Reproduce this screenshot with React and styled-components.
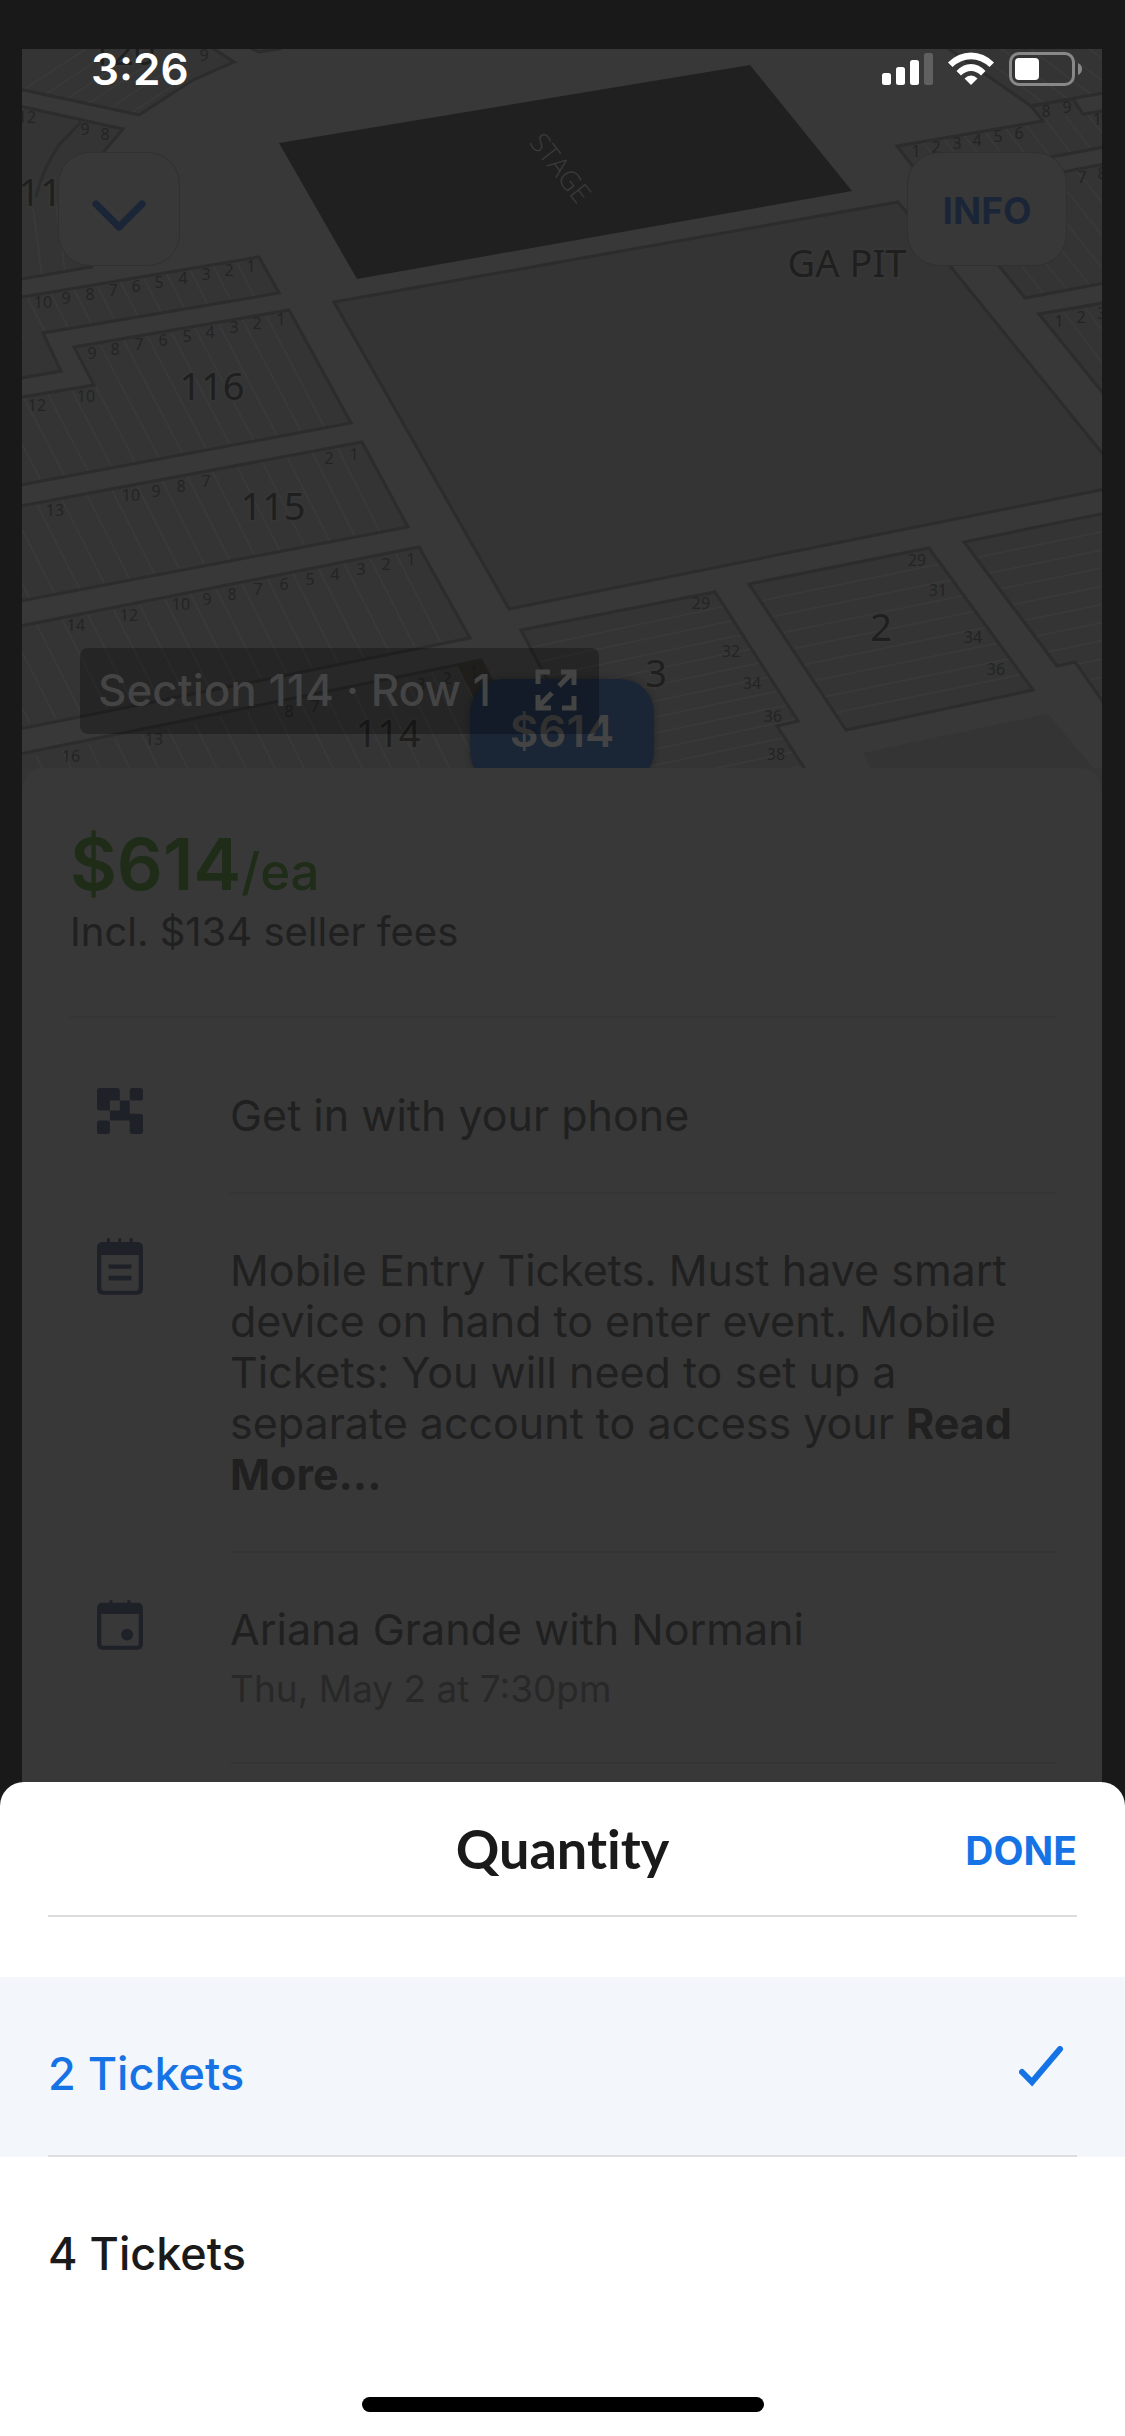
import React, { useState } from "react";
import styled, { createGlobalStyle } from "styled-components";

const sections = [
  {
    id: "s120",
    points: "10,40 200,40 234,62 193,80 139,115 10,87",
    rows: [20, 92, 86, 49, 21, 5, 8],
  },
  { id: "s121", points: "240,40 252,49 259,52 279,49 300,40", rows: [0, 0, 0, 0, 0, 0, 0] },
  {
    id: "s117",
    points: "10,104 123,129 100,156 60,210 91,267 10,281",
    rows: [33, 208, 42, 276, 23, -4, 3],
  },
  {
    id: "s117b",
    points: "10,299 259,257 279,293 43,333 61,371 10,380",
    rows: [236, 261, 255, 298, -23.2, 4, 11],
  },
  {
    id: "s116",
    points: "74,347 289,310 351,423 10,487 10,399 94,385",
    rows: [266, 315, 325, 428, -23.7, 4.3, 15],
  },
  {
    id: "s115",
    points: "10,508 362,442 408,527 10,603",
    rows: [337, 447, 380, 532, -25, 4.8, 15],
  },
  {
    id: "s114a",
    points: "10,628 419,547 470,638 10,731",
    rows: [395, 552, 441, 643, -25.7, 5, 17],
  },
  {
    id: "s114",
    points: "10,756 481,660 545,780 10,780",
    rows: [457, 665, 510, 773, -26.3, 5.7, 18],
  },
  {
    id: "s3",
    points: "521,630 715,592 798,721 777,726 812,780 600,780",
    rows: [500, 654, 840, 582, 0, 16, 14],
  },
  {
    id: "s2",
    points: "749,584 929,548 1033,690 846,730",
    rows: [755, 602, 950, 562, 10.6, 16, 8],
  },
  {
    id: "s1",
    points: "964,542 1120,510 1120,726 1075,662 1057,666",
    rows: [974, 558, 1130, 526, 10.6, 16, 12],
  },
  {
    id: "r1",
    points: "936,40 1031,106 1120,90 1120,40",
    rows: [960, 40, 1053, 110, 24, -4, 5],
  },
  {
    id: "r2",
    points: "1031,106 1043,121 897,146 924,181 1120,144 1120,108 1083,114 1073,99",
    rows: [922, 141, 950, 177, 20.5, -3.6, 10],
  },
  {
    id: "r3",
    points: "942,195 1120,161 1120,280 1025,298",
    rows: [962, 191, 1045, 295, 23, -4, 9],
  },
  {
    id: "r4",
    points: "1039,314 1120,300 1120,414",
    rows: [1062, 310, 1130, 400, 22, -4, 3],
  },
];

const rowNumbers = [
  [204, 61, "9"], [27, 123, "12"], [85, 135, "9"], [105, 140, "8"],
  [43, 308, "10"], [66, 304, "9"], [90, 300, "8"], [113, 296, "7"], [136, 292, "6"],
  [159, 288, "5"], [183, 284, "4"], [206, 280, "3"], [229, 276, "2"], [251, 272, "1"],
  [92, 359, "9"], [115, 355, "8"], [139, 350, "7"], [163, 346, "6"], [187, 342, "5"],
  [210, 338, "4"], [234, 333, "3"], [257, 329, "2"], [281, 325, "1"],
  [86, 402, "10"], [37, 411, "12"],
  [354, 460, "1"], [329, 464, "2"], [206, 487, "7"], [181, 492, "8"], [156, 497, "9"],
  [131, 501, "10"], [55, 516, "13"],
  [411, 565, "1"], [386, 570, "2"], [361, 575, "3"], [335, 580, "4"], [310, 585, "5"],
  [284, 590, "6"], [258, 595, "7"], [232, 600, "8"], [207, 605, "9"], [181, 610, "10"],
  [129, 621, "12"], [76, 631, "14"],
  [474, 678, "1"], [447, 684, "2"], [421, 690, "3"], [315, 712, "7"], [289, 717, "8"],
  [154, 745, "13"], [71, 762, "16"],
  [701, 609, "29"], [731, 657, "32"], [752, 689, "34"], [773, 722, "36"], [776, 760, "38"],
  [917, 566, "29"], [938, 596, "31"], [973, 643, "34"], [996, 675, "36"],
  [916, 157, "1"], [936, 153, "2"], [957, 149, "3"], [977, 146, "4"], [998, 142, "5"],
  [1019, 139, "6"], [1046, 117, "8"], [1067, 113, "9"], [1102, 125, "10"],
  [1082, 183, "7"], [1102, 179, "8"], [1059, 327, "1"], [1081, 323, "2"], [1102, 319, "3"],
];

const sectionNames = [
  [123, 65, "120"], [51, 206, "117"], [212, 400, "116"], [273, 520, "115"],
  [388, 747, "114"], [656, 687, "3"], [881, 641, "2"], [847, 277, "GA PIT"],
];

const quantities = [2, 4];

const SeatMap = () => (
  <StyledMapSvg viewBox="22 49 1080 719" preserveAspectRatio="xMidYMin slice">
    {sections.map(({ id, points, rows }) => {
      const [x1, y1, x2, y2, dx, dy, count] = rows;
      return (
        <g key={id}>
          <clipPath id={id}>
            <polygon points={points} />
          </clipPath>
          <polygon points={points} fill="#343434" />
          <g clipPath={`url(#${id})`} stroke="#393939" strokeWidth="2">
            {Array.from({ length: count }, (_, i) => (
              <line
                key={i}
                x1={x1 + dx * i}
                y1={y1 + dy * i}
                x2={x2 + dx * i}
                y2={y2 + dy * i}
              />
            ))}
          </g>
          <polygon points={points} fill="none" stroke="#2c2c2c" strokeWidth="3" />
        </g>
      );
    })}
    <path d="M81 122L59 145Q42 170 36 197" fill="none" stroke="#2c2c2c" strokeWidth="3" />
    <polygon points="457,665 481,660 538,768 510,768" fill="#2c2a26" />
    <polygon points="863,753 1048,714 1093,768 871,768" fill="#343434" />
    <polygon
      points="334,302 898,202 1120,475 1120,486 509,609"
      fill="#343434"
      stroke="#2c2c2c"
      strokeWidth="3"
    />
    <polygon points="279,143 750,65 852,191 357,279" fill="#202020" />
    <text
      transform="translate(553 174) rotate(52)"
      fontFamily="'Open Sans', sans-serif"
      fontWeight="300"
      fontSize="27"
      textAnchor="middle"
      fill="#3b3b3b"
    >
      STAGE
    </text>
    <g fontFamily="'Noto Sans', sans-serif" textAnchor="middle">
      {rowNumbers.map(([x, y, label]) => (
        <text key={`${x}-${y}`} x={x} y={y} fontSize="16" fill="#242424">
          {label}
        </text>
      ))}
      {sectionNames.map(([x, y, label]) => (
        <text
          key={label}
          x={x}
          y={y}
          fontSize="38"
          fill="#1f1f1f"
          stroke="#363636"
          strokeWidth="4"
          paintOrder="stroke"
        >
          {label}
        </text>
      ))}
    </g>
  </StyledMapSvg>
);

const StatusIcons = () => (
  <svg width="201" height="34" viewBox="0 0 201 34" fill="#fff">
    <rect x="0" y="21" width="9" height="12" rx="2.5" />
    <rect x="14" y="15" width="9" height="18" rx="2.5" />
    <rect x="28" y="8" width="9" height="25" rx="2.5" />
    <rect x="42" y="1" width="9" height="32" rx="2.5" fill="#606060" />
    <path d="M66 10.500Q76 .5 89 .5T112 10.500L107.500 15Q99 7.200 89 7.200T70.500 15Z" />
    <path d="M74.500 19Q81 12 89 12T103.500 19L99 23.500Q94.500 19 89 19T79 23.500Z" />
    <path d="M82.500 26.500Q85.500 23.500 89 23.500T95.500 26.500L89 33Z" />
    <rect x="128.500" y="1.500" width="63" height="31" rx="8.500" fill="none" stroke="#888" strokeWidth="3" />
    <rect x="133" y="6" width="24" height="22" rx="4" />
    <path d="M196 11Q200 13 200 17T196 23Z" fill="#888" />
  </svg>
);

const PhoneEntryIcon = () => (
  <svg width="46" height="46" viewBox="52 89 139 139" fill="#1f2128">
    <path d="M60 89H113Q121 89 121 97V127H91V157H60Q52 157 52 149V97Q52 89 60 89Z" />
    <rect x="151" y="89" width="40" height="38" rx="8" />
    <path d="M121 127H151V167H183Q191 167 191 175V220Q191 228 183 228H159Q151 228 151 220V187H91V157H121Z" />
    <rect x="52" y="187" width="39" height="41" rx="8" />
  </svg>
);

const NotesIcon = () => (
  <svg width="46" height="57" viewBox="0 0 139 170" fill="#1f2128">
    <path d="M30 0h9v14h-9zM64 0h9v14h-9zM99 0h9v14h-9zM35 79h69v13H35zM35 113h69v14H35z" />
    <path
      fillRule="evenodd"
      d="M18 11H121Q139 11 139 29V152Q139 170 121 170H18Q0 170 0 152V29Q0 11 18 11ZM13 50V150Q13 158 21 158H118Q126 158 126 150V50Z"
    />
  </svg>
);

const CalendarIcon = () => (
  <svg width="46" height="50" viewBox="0 0 139 150" fill="#1f2128">
    <path d="M38 0h9v14h-9zM92 0h9v14h-9z" />
    <circle cx="91" cy="104" r="18" />
    <path
      fillRule="evenodd"
      d="M18 8H121Q139 8 139 26V132Q139 150 121 150H18Q0 150 0 132V26Q0 8 18 8ZM13 42V130Q13 138 21 138H118Q126 138 126 130V42Z"
    />
  </svg>
);

const App = () => {
  const [quantity, setQuantity] = useState(2);

  const onChange = (e) => {
    setQuantity(Number(e.target.value));
  };

  return (
    <StyledPage>
      <GlobalStyle />
      <StyledStatusBar>
        <span>3:26</span>
        <StatusIcons />
      </StyledStatusBar>

      <StyledListing>
        <StyledCard>
          <StyledMap>
            <SeatMap />
            <StyledPriceTag>$614</StyledPriceTag>
            <StyledSeatPill>
              Section 114 · Row 1
              <svg width="42" height="42" viewBox="0 0 42 42" fill="none" stroke="#444" strokeWidth="5">
                <path d="M3 15V3H15M39 27V39H27M24 17L37 4M26 3H39V16M17 24L4 37M3 26V39H16" />
              </svg>
            </StyledSeatPill>
            <StyledMapControls>
              <StyledMapButton aria-label="Close">
                <svg width="54" height="36" viewBox="0 0 54 36" fill="none">
                  <path
                    d="M4 6L27 29L50 6"
                    stroke="#1a2637"
                    strokeWidth="7"
                    strokeLinecap="round"
                    strokeLinejoin="round"
                  />
                </svg>
              </StyledMapButton>
              <StyledMapButton $wide>INFO</StyledMapButton>
            </StyledMapControls>
          </StyledMap>

          <StyledDetails>
            <StyledPriceBlock>
              <StyledPrice>
                $614<small>/ea</small>
              </StyledPrice>
              <StyledFees>Incl. $134 seller fees</StyledFees>
            </StyledPriceBlock>

            <StyledDetailRow>
              <StyledIconCell $top={72}>
                <PhoneEntryIcon />
              </StyledIconCell>
              <StyledDetailText $top={72}>
                <p>Get in with your phone</p>
              </StyledDetailText>
            </StyledDetailRow>
            <StyledDetailRow>
              <StyledIconCell>
                <NotesIcon />
              </StyledIconCell>
              <StyledDetailText>
                <p>
                  Mobile Entry Tickets. Must have smart device on hand to enter event. Mobile
                  Tickets: You will need to set up a separate account to access your{" "}
                  <a href="#more">Read More...</a>
                </p>
              </StyledDetailText>
            </StyledDetailRow>
            <StyledDetailRow>
              <StyledIconCell>
                <CalendarIcon />
              </StyledIconCell>
              <StyledDetailText>
                <p>Ariana Grande with Normani</p>
                <StyledDate>Thu, May 2 at 7:30pm</StyledDate>
              </StyledDetailText>
            </StyledDetailRow>
          </StyledDetails>
        </StyledCard>
      </StyledListing>

      <StyledSheet>
        <StyledSheetHeader>
          <h2>Quantity</h2>
          <StyledDone>DONE</StyledDone>
        </StyledSheetHeader>
        <StyledOptions>
          {quantities.map((item) => (
            <StyledOption key={item} $selected={item === quantity}>
              <StyledRadio
                type="radio"
                name="quantity"
                value={item}
                checked={item === quantity}
                onChange={onChange}
              />
              <span>{item} Tickets</span>
              {item === quantity && (
                <svg width="58" height="42" viewBox="0 0 58 42" fill="none">
                  <path d="M3 26L13 36L41 3" stroke="#1673e6" strokeWidth="6" strokeLinecap="round" />
                </svg>
              )}
            </StyledOption>
          ))}
        </StyledOptions>
        <StyledHomeBar />
      </StyledSheet>
    </StyledPage>
  );
};

export default App;

const GlobalStyle = createGlobalStyle`
  * {
    box-sizing: border-box;
  }
  body {
    margin: 0;
    background: #191919;
    font-family: Inter, "Liberation Sans", sans-serif;
  }
  h2, p {
    margin: 0;
  }
  svg {
    display: block;
    flex-shrink: 0;
  }
  button {
    padding: 0;
    border: none;
    background: none;
    font-family: inherit;
    cursor: pointer;
  }
`;
const StyledPage = styled.div`
  position: relative;
  display: flex;
  flex-direction: column;
  min-height: 100vh;
`;
const StyledStatusBar = styled.header`
  position: absolute;
  z-index: 1;
  top: 44px;
  left: 0;
  right: 0;
  display: flex;
  align-items: center;
  justify-content: space-between;
  height: 50px;
  padding: 0 42px 0 91px;
  color: #fff;
  font-size: 44px;
  font-weight: 600;
`;
const StyledListing = styled.main`
  display: flex;
  flex-direction: column;
  flex: 1;
  padding: 49px 23px 0 22px;
`;
const StyledCard = styled.article`
  display: flex;
  flex-direction: column;
  flex: 1;
  background: #353535;
`;
const StyledMap = styled.section`
  position: relative;
  overflow: hidden;
  background: #383838;
`;
const StyledMapSvg = styled.svg`
  width: 100%;
  height: 719px;
`;
const StyledMapControls = styled.div`
  position: absolute;
  top: 103px;
  left: 36px;
  right: 35px;
  display: flex;
  justify-content: space-between;
`;
const StyledMapButton = styled.button`
  display: flex;
  align-items: center;
  justify-content: center;
  width: ${({ $wide }) => ($wide ? "160px" : "122px")};
  height: 114px;
  padding-top: ${({ $wide }) => ($wide ? "2px" : "14px")};
  border: 1px solid #303030;
  border-radius: 32px;
  background: #383838;
  color: #1a2637;
  font-size: 37px;
  font-weight: 700;
`;
const StyledPriceTag = styled.div`
  position: absolute;
  top: 630px;
  left: 448px;
  width: 184px;
  height: 106px;
  padding-top: 28px;
  border-radius: 34px;
  background: #1a2636;
  box-shadow: 0 0 6px rgba(0, 0, 0, 0.3);
  color: #444;
  font-size: 44px;
  font-weight: 600;
  line-height: 48px;
  text-align: center;
`;
const StyledSeatPill = styled.div`
  position: absolute;
  top: 599px;
  left: 58px;
  display: flex;
  align-items: center;
  justify-content: space-between;
  width: 519px;
  height: 86px;
  padding: 0 22px 2px 18px;
  border-radius: 8px;
  background: rgba(0, 0, 0, 0.28);
  color: #444;
  font-size: 44px;
  font-weight: 500;
`;
const StyledDetails = styled.section`
  flex: 1;
  padding: 56px 45px 17px 48px;
  border-radius: 22px 22px 0 0;
  background: #383838;
  color: #202020;
`;
const StyledPriceBlock = styled.div`
  padding-bottom: 60px;
  border-bottom: 2px solid #343434;
`;
const StyledPrice = styled.p`
  color: #1f2c18;
  font-size: 72px;
  font-weight: 600;
  line-height: 80px;

  small {
    font-size: 51px;
    font-weight: 500;
    line-height: 1;
  }
`;
const StyledFees = styled.p`
  margin-top: 4px;
  font-size: 40px;
  line-height: 48px;
`;
const StyledDetailRow = styled.div`
  display: flex;
`;
const StyledDetailText = styled.div`
  flex: 1;
  padding: ${({ $top }) => $top || 51}px 0 51px;
  border-bottom: 2px solid #343434;
  font-size: 43px;
  line-height: 51px;

  a {
    color: inherit;
    font-weight: 700;
    text-decoration: none;
  }
`;
const StyledIconCell = styled.div`
  display: flex;
  align-items: center;
  width: 160px;
  height: 42px;
  margin-top: ${({ $top }) => $top || 51}px;
  padding-left: 27px;
`;
const StyledDate = styled.p`
  margin-top: 12px;
  color: #282828;
  font-size: 37px;
  line-height: 44px;
`;
const StyledSheet = styled.section`
  border-radius: 24px 24px 0 0;
  background: #fff;
`;
const StyledSheetHeader = styled.div`
  display: grid;
  grid-template-columns: 1fr auto 1fr;
  align-items: center;
  height: 135px;
  margin: 0 48px;
  border-bottom: 2px solid #ddd;

  h2 {
    grid-column: 2;
    color: #1a1a1a;
    font-family: Lato, sans-serif;
    font-size: 54px;
    font-weight: 700;
    font-variant-ligatures: none;
  }
`;
const StyledDone = styled.button`
  justify-self: end;
  padding-top: 3px;
  color: #1673e6;
  font-size: 39px;
  font-weight: 700;
`;
const StyledOptions = styled.div`
  margin-top: 60px;
`;
const StyledOption = styled.label`
  display: flex;
  align-items: center;
  justify-content: space-between;
  height: 180px;
  padding: 0 48px;
  background: ${({ $selected }) => ($selected ? "#f3f6fb" : "#fff")};
  color: ${({ $selected }) => ($selected ? "#1673e6" : "#1a1a1a")};
  font-size: 45px;
  font-weight: 500;
  cursor: pointer;

  &:not(:last-child) {
    background-image: linear-gradient(#ddd, #ddd);
    background-position: bottom;
    background-size: calc(100% - 96px) 2px;
    background-repeat: no-repeat;
  }
  span {
    flex: 1;
    padding-top: 12px;
  }
`;
const StyledRadio = styled.input`
  appearance: none;
  width: 0;
  height: 0;
  margin: 0;
`;
const StyledHomeBar = styled.div`
  width: 402px;
  height: 15px;
  margin: 60px auto 24px;
  border-radius: 8px;
  background: #000;
`;
